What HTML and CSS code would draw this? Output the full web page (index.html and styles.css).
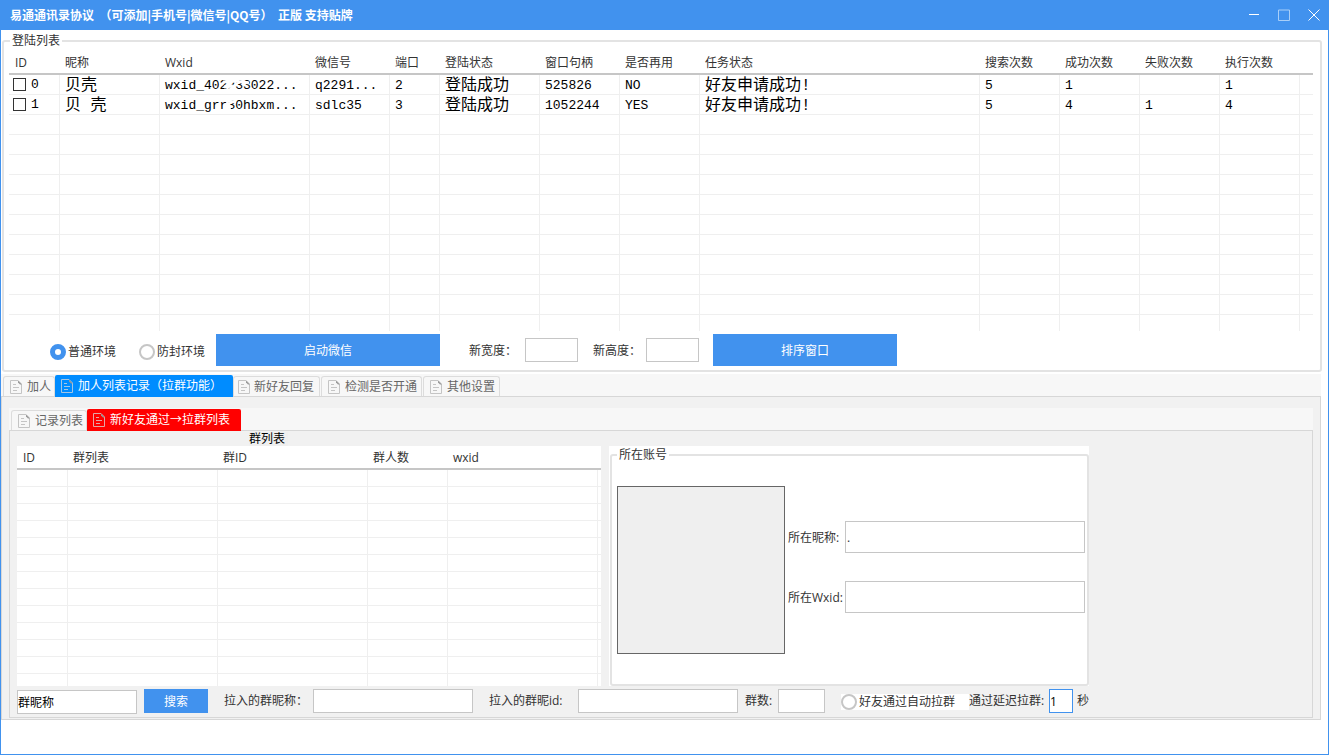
FILE: index.html
```html
<!DOCTYPE html>
<html lang="zh-CN">
<head>
<meta charset="utf-8">
<title>易通通讯录协议</title>
<link rel="stylesheet" href="styles.css">
</head>
<body>
<svg class="defs" aria-hidden="true">
  <symbol id="page" viewBox="0 0 12 14">
    <path d="M.5 .5H8L11.500 4V13.500H.5Z" fill="none" stroke="currentColor"/>
    <path d="M3 4.500H6M3 7.500H9M3 10.500H7" fill="none" stroke="currentColor"/>
    <path class="fold" d="M8 .5L11.500 4V4.500H10L8 2.500Z"/>
  </symbol>
</svg>
<div class="window">
  <header class="titlebar">
    <h1 class="title">易通通讯录协议  （可添加|手机号|微信号|QQ号）  正版 支持贴牌</h1>
    <button class="sys" aria-label="最小化"><svg width="12" height="12"><path d="M1 5.500H11" stroke="#fff"/></svg></button>
    <button class="sys" aria-label="最大化"><svg width="12" height="12"><path d="M.5 1H11.500V11.500H.5Z" fill="none" stroke="#a9cff8"/></svg></button>
    <button class="sys" aria-label="关闭"><svg width="12" height="12"><path d="M.5 .5L11.500 11.500M11.500 .5L.5 11.500" stroke="#fff"/></svg></button>
  </header>

  <fieldset class="group logins">
    <legend class="legend">登陆列表</legend>
    <table class="grid login-grid">
      <colgroup><col class="w51"><col class="w100"><col class="w150"><col class="w80"><col class="w50"><col class="w100"><col class="w80"><col class="w80"><col class="w280"><col class="w80"><col class="w80"><col class="w80"><col class="w80"><col></colgroup>
      <thead><tr><th>ID</th><th>昵称</th><th>Wxid</th><th>微信号</th><th>端口</th><th>登陆状态</th><th>窗口句柄</th><th>是否再用</th><th>任务状态</th><th>搜索次数</th><th>成功次数</th><th>失败次数</th><th>执行次数</th><th></th></tr></thead>
      <tbody>
        <tr><td><label class="pick"><input type="checkbox" class="check">0</label></td><td class="han">贝壳</td><td><span class="masked">wxid_402233022...<svg class="smudge" width="30" height="16"><path d="M2 4L14 3L28 5M3 9L12 8M1 13L12 11L19 13" fill="none" stroke="#fff" stroke-width="3"/></svg></span></td><td>q2291...</td><td>2</td><td class="han">登陆成功</td><td>525826</td><td>NO</td><td class="han">好友申请成功!</td><td>5</td><td>1</td><td></td><td>1</td><td></td></tr>
        <tr><td><label class="pick"><input type="checkbox" class="check">1</label></td><td class="han">贝 壳</td><td><span class="masked">wxid_grr30hbxm...<svg class="smudge" width="30" height="16"><path d="M5 3L15 4M4 8L10 10M4 14L18 13" fill="none" stroke="#fff" stroke-width="3"/></svg></span></td><td>sdlc35</td><td>3</td><td class="han">登陆成功</td><td>1052244</td><td>YES</td><td class="han">好友申请成功!</td><td>5</td><td>4</td><td>1</td><td>4</td><td></td></tr>
        <tr><td><td><td><td><td><td><td><td><td><td><td><td><td><td></tr>
        <tr><td><td><td><td><td><td><td><td><td><td><td><td><td><td></tr>
        <tr><td><td><td><td><td><td><td><td><td><td><td><td><td><td></tr>
        <tr><td><td><td><td><td><td><td><td><td><td><td><td><td><td></tr>
        <tr><td><td><td><td><td><td><td><td><td><td><td><td><td><td></tr>
        <tr><td><td><td><td><td><td><td><td><td><td><td><td><td><td></tr>
        <tr><td><td><td><td><td><td><td><td><td><td><td><td><td><td></tr>
        <tr><td><td><td><td><td><td><td><td><td><td><td><td><td><td></tr>
        <tr><td><td><td><td><td><td><td><td><td><td><td><td><td><td></tr>
        <tr><td><td><td><td><td><td><td><td><td><td><td><td><td><td></tr>
        <tr class="rest"><td><td><td><td><td><td><td><td><td><td><td><td><td><td></tr>
      </tbody>
    </table>
    <div class="launch">
      <div class="envs">
        <label class="option"><input type="radio" name="env" class="radio" checked>普通环境</label>
        <label class="option"><input type="radio" name="env" class="radio">防封环境</label>
      </div>
      <button class="btn start">启动微信</button>
      <label class="size" for="win-w">新宽度：</label><input id="win-w" class="field size-field">
      <label class="size second" for="win-h">新高度：</label><input id="win-h" class="field size-field">
      <button class="btn sort">排序窗口</button>
    </div>
  </fieldset>

  <nav class="tabs outer-tabs">
    <button class="tab"><svg class="icon" width="12" height="14"><use href="#page"/></svg>加人</button>
    <button class="tab on blue"><svg class="icon" width="12" height="14"><use href="#page"/></svg>加人列表记录（拉群功能）</button>
    <button class="tab"><svg class="icon" width="12" height="14"><use href="#page"/></svg>新好友回复</button>
    <button class="tab"><svg class="icon" width="12" height="14"><use href="#page"/></svg>检测是否开通</button>
    <button class="tab"><svg class="icon" width="12" height="14"><use href="#page"/></svg>其他设置</button>
  </nav>
  <section class="panel outer-panel">
    <nav class="tabs inner-tabs">
      <button class="tab"><svg class="icon" width="12" height="14"><use href="#page"/></svg>记录列表</button>
      <button class="tab on red"><svg class="icon" width="12" height="14"><use href="#page"/></svg>新好友通过→拉群列表</button>
    </nav>
    <section class="panel inner-panel">
      <h2 class="caption">群列表</h2>
      <div class="columns">
        <table class="grid group-grid">
          <colgroup><col class="w51"><col class="w150"><col class="w150"><col class="w80"><col class="w150"><col></colgroup>
          <thead><tr><th>ID</th><th>群列表</th><th>群ID</th><th>群人数</th><th>wxid</th><th></th></tr></thead>
          <tbody>
            <tr><td><td><td><td><td><td></tr>
            <tr><td><td><td><td><td><td></tr>
            <tr><td><td><td><td><td><td></tr>
            <tr><td><td><td><td><td><td></tr>
            <tr><td><td><td><td><td><td></tr>
            <tr><td><td><td><td><td><td></tr>
            <tr><td><td><td><td><td><td></tr>
            <tr><td><td><td><td><td><td></tr>
            <tr><td><td><td><td><td><td></tr>
            <tr><td><td><td><td><td><td></tr>
            <tr><td><td><td><td><td><td></tr>
            <tr><td><td><td><td><td><td></tr>
            <tr class="rest"><td><td><td><td><td><td></tr>
          </tbody>
        </table>
        <div class="account-wrap">
          <fieldset class="group account">
            <legend class="legend">所在账号</legend>
            <div class="account-body">
              <div class="avatar"></div>
              <div class="account-fields">
                <div class="line"><label for="nick">所在昵称:</label><input id="nick" class="field tall" value="."></div>
                <div class="line"><label for="wxid">所在Wxid:</label><input id="wxid" class="field tall"></div>
              </div>
            </div>
          </fieldset>
        </div>
      </div>
      <div class="actions">
        <input class="field query" aria-label="群昵称" value="群昵称">
        <button class="btn search">搜索</button>
        <label class="lab wide" for="g-name">拉入的群昵称：</label><input id="g-name" class="field long">
        <label class="lab wide" for="g-id">拉入的群昵id:</label><input id="g-id" class="field long">
        <label class="lab count-lab" for="g-count">群数:</label><input id="g-count" class="field count">
        <label class="option auto"><input type="radio" class="radio">好友通过自动拉群</label>
        <label class="delay-lab" for="delay">通过延迟拉群:</label><input id="delay" class="field delay" value="1">
        <span class="unit">秒</span>
      </div>
    </section>
  </section>
</div>
</body>
</html>
```
FILE: styles.css
```css
* { box-sizing: border-box; }
body { margin: 0; font: 12px/16px "Open Sans", "Noto Sans CJK SC", sans-serif; color: #333; background: #fff; }
button, input { font: inherit; color: inherit; margin: 0; padding: 0; border: 0; border-radius: 0; }
.defs { position: absolute; width: 0; height: 0; }

.window { display: flex; flex-direction: column; min-height: 100vh; border: 1px solid #4192ee; border-top: 0; }
.titlebar { display: flex; height: 30px; margin: 0 -1px; padding-left: 10px; background: #4192ee; color: #fff; }
.title { flex: 1; margin: 0; font: bold 12px/30px "Noto Sans CJK SC", sans-serif; white-space: pre; }
.sys { display: grid; place-items: center; width: 30px; height: 30px; background: none; }

.group { min-width: 0; margin: 0; border: 2px solid #e3e3e3; border-radius: 3px; }
.legend { padding: 0 2px; line-height: 14px; }
.logins { margin: 4px 6px 0 1px; padding: 2px 7px 4px 5px; }
.logins .legend { margin-left: 1px; }

.grid { width: 100%; table-layout: fixed; border-spacing: 0; background: #fff; }
.grid th { height: 25px; padding: 2px 0 0 5px; border-bottom: 2px solid #c6c6c6; font-weight: normal; text-align: left; white-space: nowrap; }
.grid th:first-child { padding-left: 6px; }
.grid td { height: 20px; padding: 0 0 0 5px; border: solid #efefef; border-width: 0 1px 1px 0; white-space: nowrap; }
.grid td:last-child { border-right: 0; }
.grid .rest td { height: 16px; border-bottom: 0; }
.login-grid th { height: 25px; }
.login-grid td { padding-top: 2px; font: 13px/17px "Liberation Mono", "Noto Sans CJK SC", monospace; color: #000; }
.login-grid td:first-child { padding: 0 0 0 4px; }
.login-grid .han { padding-top: 4px; font-size: 16px; line-height: 15px; }
.group-grid th { height: 24px; }
.group-grid td { height: 17px; }
.group-grid .rest td { height: 12px; }
.w50 { width: 50px; } .w51 { width: 51px; } .w80 { width: 80px; } .w100 { width: 100px; } .w150 { width: 150px; } .w280 { width: 280px; }

.pick { display: flex; align-items: center; gap: 5px; }
.check { appearance: none; width: 13px; height: 13px; border: 1px solid #333; background: #fff; }
.masked { position: relative; }
.smudge { position: absolute; left: 56px; top: 0; }

.launch { display: flex; align-items: center; padding: 3px 0 0 41px; }
.envs { display: flex; gap: 23px; padding-top: 4px; }
.option { display: flex; align-items: center; gap: 2px; white-space: nowrap; }
.radio { appearance: none; flex: none; width: 16px; height: 16px; border: 2px solid #c6c6c6; border-radius: 50%; background: #fff; }
.radio:checked { border: 5px solid #4192ee; }
.btn { height: 24px; padding-top: 2px; background: #4192ee; color: #fff; }
.start { width: 224px; height: 32px; margin: 0 29px 0 11px; }
.sort { width: 184px; height: 32px; margin-left: 14px; }
.size { width: 56px; padding-top: 2px; white-space: nowrap; }
.size.second { width: 53px; margin-left: 15px; }
.field { height: 24px; border: 1px solid #c6c6c6; background: #fff; outline: 0; }
.size-field { width: 53px; }

.tabs { display: flex; align-items: flex-end; height: 22px; background: #f7f7f7; }
.outer-tabs { margin: 2px 7px 0 0; padding-left: 2px; }
.inner-tabs { padding-left: 2px; }
.tab { display: flex; align-items: center; gap: 5px; height: 20px; padding: 0 4px 0 6px; border: 1px solid #dcdcdc; border-width: 1px 1px 0; border-radius: 3px 3px 0 0; background: #f7f7f7; color: #666; white-space: nowrap; }
.tab:first-child { padding-right: 3px; }
.tab:not(.on) + .tab:not(.on) { margin-left: 1px; }
.tab.on + .tab { padding: 0 5px 0 4px; gap: 4px; }
.tab.on { position: relative; height: 22px; margin-bottom: -1px; padding: 0 11px 0 6px; border-width: 0; border-radius: 2px 2px 0 0; color: #fff; }
.blue { background: #008cff; }
.red { background: #f00; }
.icon { flex: none; color: #c4c4c4; }
.fold { fill: #999; }
.blue .icon { color: #a5c6e4; }
.red .icon { color: #e3a5a5; }

.panel { border: 1px solid #d7d7d7; background: #f1f1f1; }
.outer-panel { margin-right: 7px; padding: 11px 7px 1px; }
.inner-panel { padding: 1px 7px 0; }
.caption { width: fit-content; margin: 0 0 0 232px; padding-right: 3px; background: #efefef; font-size: 12px; font-weight: normal; line-height: 14px; color: #000; }
.columns { display: flex; gap: 8px; }
.group-grid { width: 584px; }
.account-wrap { display: flex; width: 480px; padding: 1px 0 0 1px; background: #fff; }
.account { flex: 1; padding: 0 2px 0 5px; }
.account .legend { line-height: 16px; }
.account-body { display: flex; gap: 3px; padding: 23px 0 30px; }
.avatar { width: 168px; height: 168px; border: 1px solid #666; background: #efefef; }
.account-fields { flex: 1; display: grid; align-content: start; gap: 28px; padding-top: 35px; }
.line { display: flex; align-items: center; }
.line label { width: 57px; padding-top: 2px; white-space: nowrap; }
.tall { flex: 1; min-width: 0; height: 32px; padding-left: 1px; }

.actions { display: flex; align-items: center; padding: 2px 0 3px; }
.query { width: 120px; margin-top: 2px; color: #000; }
.search { width: 64px; margin-left: 7px; }
.lab { margin-left: 16px; white-space: nowrap; }
.wide { width: 89px; }
.long { width: 160px; }
.count-lab { width: 33px; margin-left: 7px; }
.count { width: 47px; }
.auto { width: 128px; margin: 2px 0 0 16px; background: #fff; }
.delay-lab { width: 80px; white-space: nowrap; }
.delay { width: 24px; border-color: #4192ee; color: #000; }
.unit { margin-left: 4px; }
```
